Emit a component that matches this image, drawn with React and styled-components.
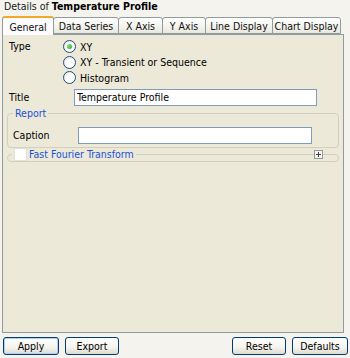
import styled, { createGlobalStyle } from "styled-components";
import { useState } from "react";

const GlobalStyle = createGlobalStyle`
  html, body {
    margin: 0;
    padding: 0;
    background: #f4f3ee;
    font-family: Tahoma, "DejaVu Sans Condensed", "Liberation Sans", sans-serif;
    font-size: 10.5px;
    color: #000;
  }
  * { box-sizing: border-box; }
`;

const Frame = styled.div`
  width: 350px;
  height: 358px;
  display: flex;
  flex-direction: column;
  padding: 0 2px;
  background: #f4f3ee;
`;

const Heading = styled.div`
  height: 16px;
  padding: 0 0 0 2px;
  line-height: 12px;
  color: #222;
  b { font-weight: bold; color: #000; }
`;

const TabStrip = styled.div`
  display: flex;
  height: 18px;
  align-items: flex-end;
  position: relative;
  z-index: 1;
`;

const Tab = styled.div`
  width: ${(p) => p.$w}px;
  height: ${(p) => (p.$active ? "19px" : "17px")};
  margin-bottom: ${(p) => (p.$active ? "-1px" : "0")};
  display: flex;
  align-items: center;
  justify-content: center;
  border: 1px solid #919b9c;
  border-bottom: ${(p) => (p.$active ? "none" : "1px solid #919b9c")};
  border-top: ${(p) => (p.$active ? "2px solid #f5a828" : "1px solid #919b9c")};
  border-radius: 3px 3px 0 0;
  margin-right: -1px;
  background: ${(p) =>
    p.$active ? "#fcfcfe" : "linear-gradient(#ffffff, #f0f0ea 70%, #e8e7df)"};
  color: #111;
  white-space: nowrap;
`;

const Panel = styled.div`
  height: 299px;
  margin-right: 4px;
  border: 1px solid #919b9c;
  background: #ece9d8;
  padding: 4px 4px 0 4px;
  display: flex;
  flex-direction: column;
`;

const Row = styled.div`
  display: grid;
  grid-template-columns: ${(p) => p.$label}px 1fr;
  align-items: ${(p) => (p.$top ? "start" : "center")};
`;

const Label = styled.div`
  padding-left: 2px;
  padding-top: ${(p) => (p.$top ? "1px" : "0")};
`;

const RadioList = styled.div`
  display: flex;
  flex-direction: column;
`;

const RadioRow = styled.label`
  display: flex;
  align-items: center;
  gap: 4px;
  height: 15.5px;
  cursor: default;
`;

const RadioDot = styled.span`
  width: 13px;
  height: 13px;
  border-radius: 50%;
  border: 1px solid #1c5180;
  background: radial-gradient(circle at 60% 60%, #ffffff 40%, #dcd9cc);
  display: flex;
  align-items: center;
  justify-content: center;
  &::after {
    content: "";
    width: 5px;
    height: 5px;
    border-radius: 50%;
    background: ${(p) =>
      p.$on ? "radial-gradient(circle at 35% 35%, #7ee27e, #21a121)" : "transparent"};
  }
`;

const TextInput = styled.input`
  height: 17px;
  border: 1px solid #7f9db9;
  background: #fff;
  font-family: inherit;
  font-size: inherit;
  padding: 0 2px;
  width: ${(p) => p.$w}px;
  outline: none;
`;

const Group = styled.fieldset`
  margin: 0;
  border: 1px solid #d0d0bf;
  border-radius: 4px;
  padding: ${(p) => (p.$collapsed ? "0 3px" : "7px 3px 3px 3px")};
  min-width: 0;
  position: relative;
  height: ${(p) => (p.$collapsed ? "13px" : "auto")};
`;

const Legend = styled.legend`
  color: #2150d8;
  padding: 0 2px;
  margin-left: ${(p) => (p.$check ? "1px" : "2px")};
  display: flex;
  align-items: center;
  gap: 2px;
  line-height: 13px;
`;

const Check = styled.span`
  width: 13px;
  height: 13px;
  background: #fff;
  border: 1px solid #e3e2da;
  display: inline-block;
`;

const Expander = styled.span`
  position: absolute;
  right: 15px;
  top: -11px;
  width: 9px;
  height: 9px;
  border: 1px solid #919b9c;
  background: #f4f3ee;
  display: flex;
  align-items: center;
  justify-content: center;
  svg { display: block; }
`;

const Footer = styled.div`
  display: flex;
  align-items: center;
  gap: 6px;
  padding: 4px 0 0 1px;
`;

const Spacer = styled.div`
  flex: 1;
`;

const Button = styled.button`
  width: ${(p) => p.$w}px;
  height: 18px;
  border: 1px solid #003c74;
  border-radius: 3px;
  background: linear-gradient(#ffffff, #f4f3ee 60%, #dedbcd);
  font-family: inherit;
  font-size: inherit;
  color: #000;
  padding: 0;
  box-shadow: ${(p) => (p.$default ? "inset 0 0 0 1px #b6cef5" : "none")};
`;

const tabs = [
  ["General", 52],
  ["Data Series", 66],
  ["X Axis", 45],
  ["Y Axis", 44],
  ["Line Display", 68],
  ["Chart Display", 69],
];

const types = ["XY", "XY - Transient or Sequence", "Histogram"];

export default function App() {
  const [type, setType] = useState(0);
  const [title, setTitle] = useState("Temperature Profile");

  return (
    <>
      <GlobalStyle />
      <Frame>
        <Heading>
          Details of <b>Temperature Profile</b>
        </Heading>
        <TabStrip>
          {tabs.map(([name, w], i) => (
            <Tab key={name} $active={i === 0} $w={w}>
              {name}
            </Tab>
          ))}
        </TabStrip>
        <Panel>
          <Row $label={56} $top>
            <Label $top>Type</Label>
            <RadioList>
              {types.map((t, i) => (
                <RadioRow key={t} onClick={() => setType(i)}>
                  <RadioDot $on={type === i} />
                  {t}
                </RadioRow>
              ))}
            </RadioList>
          </Row>
          <Row $label={67} style={{ marginTop: 3 }}>
            <Label>Title</Label>
            <TextInput $w={243} value={title} onChange={(e) => setTitle(e.target.value)} />
          </Row>
          <Group style={{ marginTop: 1 }}>
            <Legend>Report</Legend>
            <Row $label={67}>
              <Label>Caption</Label>
              <TextInput $w={234} defaultValue="" />
            </Row>
          </Group>
          <Group $collapsed>
            <Legend $check>
              <Check />
              Fast Fourier Transform
            </Legend>
            <Expander>
              <svg width="7" height="7" viewBox="0 0 7 7">
                <path d="M1 3.5h5M3.5 1v5" stroke="#444" strokeWidth="1" />
              </svg>
            </Expander>
          </Group>
        </Panel>
        <Footer>
          <Button $w={56} $default>Apply</Button>
          <Button $w={54}>Export</Button>
          <Spacer />
          <Button $w={54}>Reset</Button>
          <Button $w={56}>Defaults</Button>
        </Footer>
      </Frame>
    </>
  );
}
